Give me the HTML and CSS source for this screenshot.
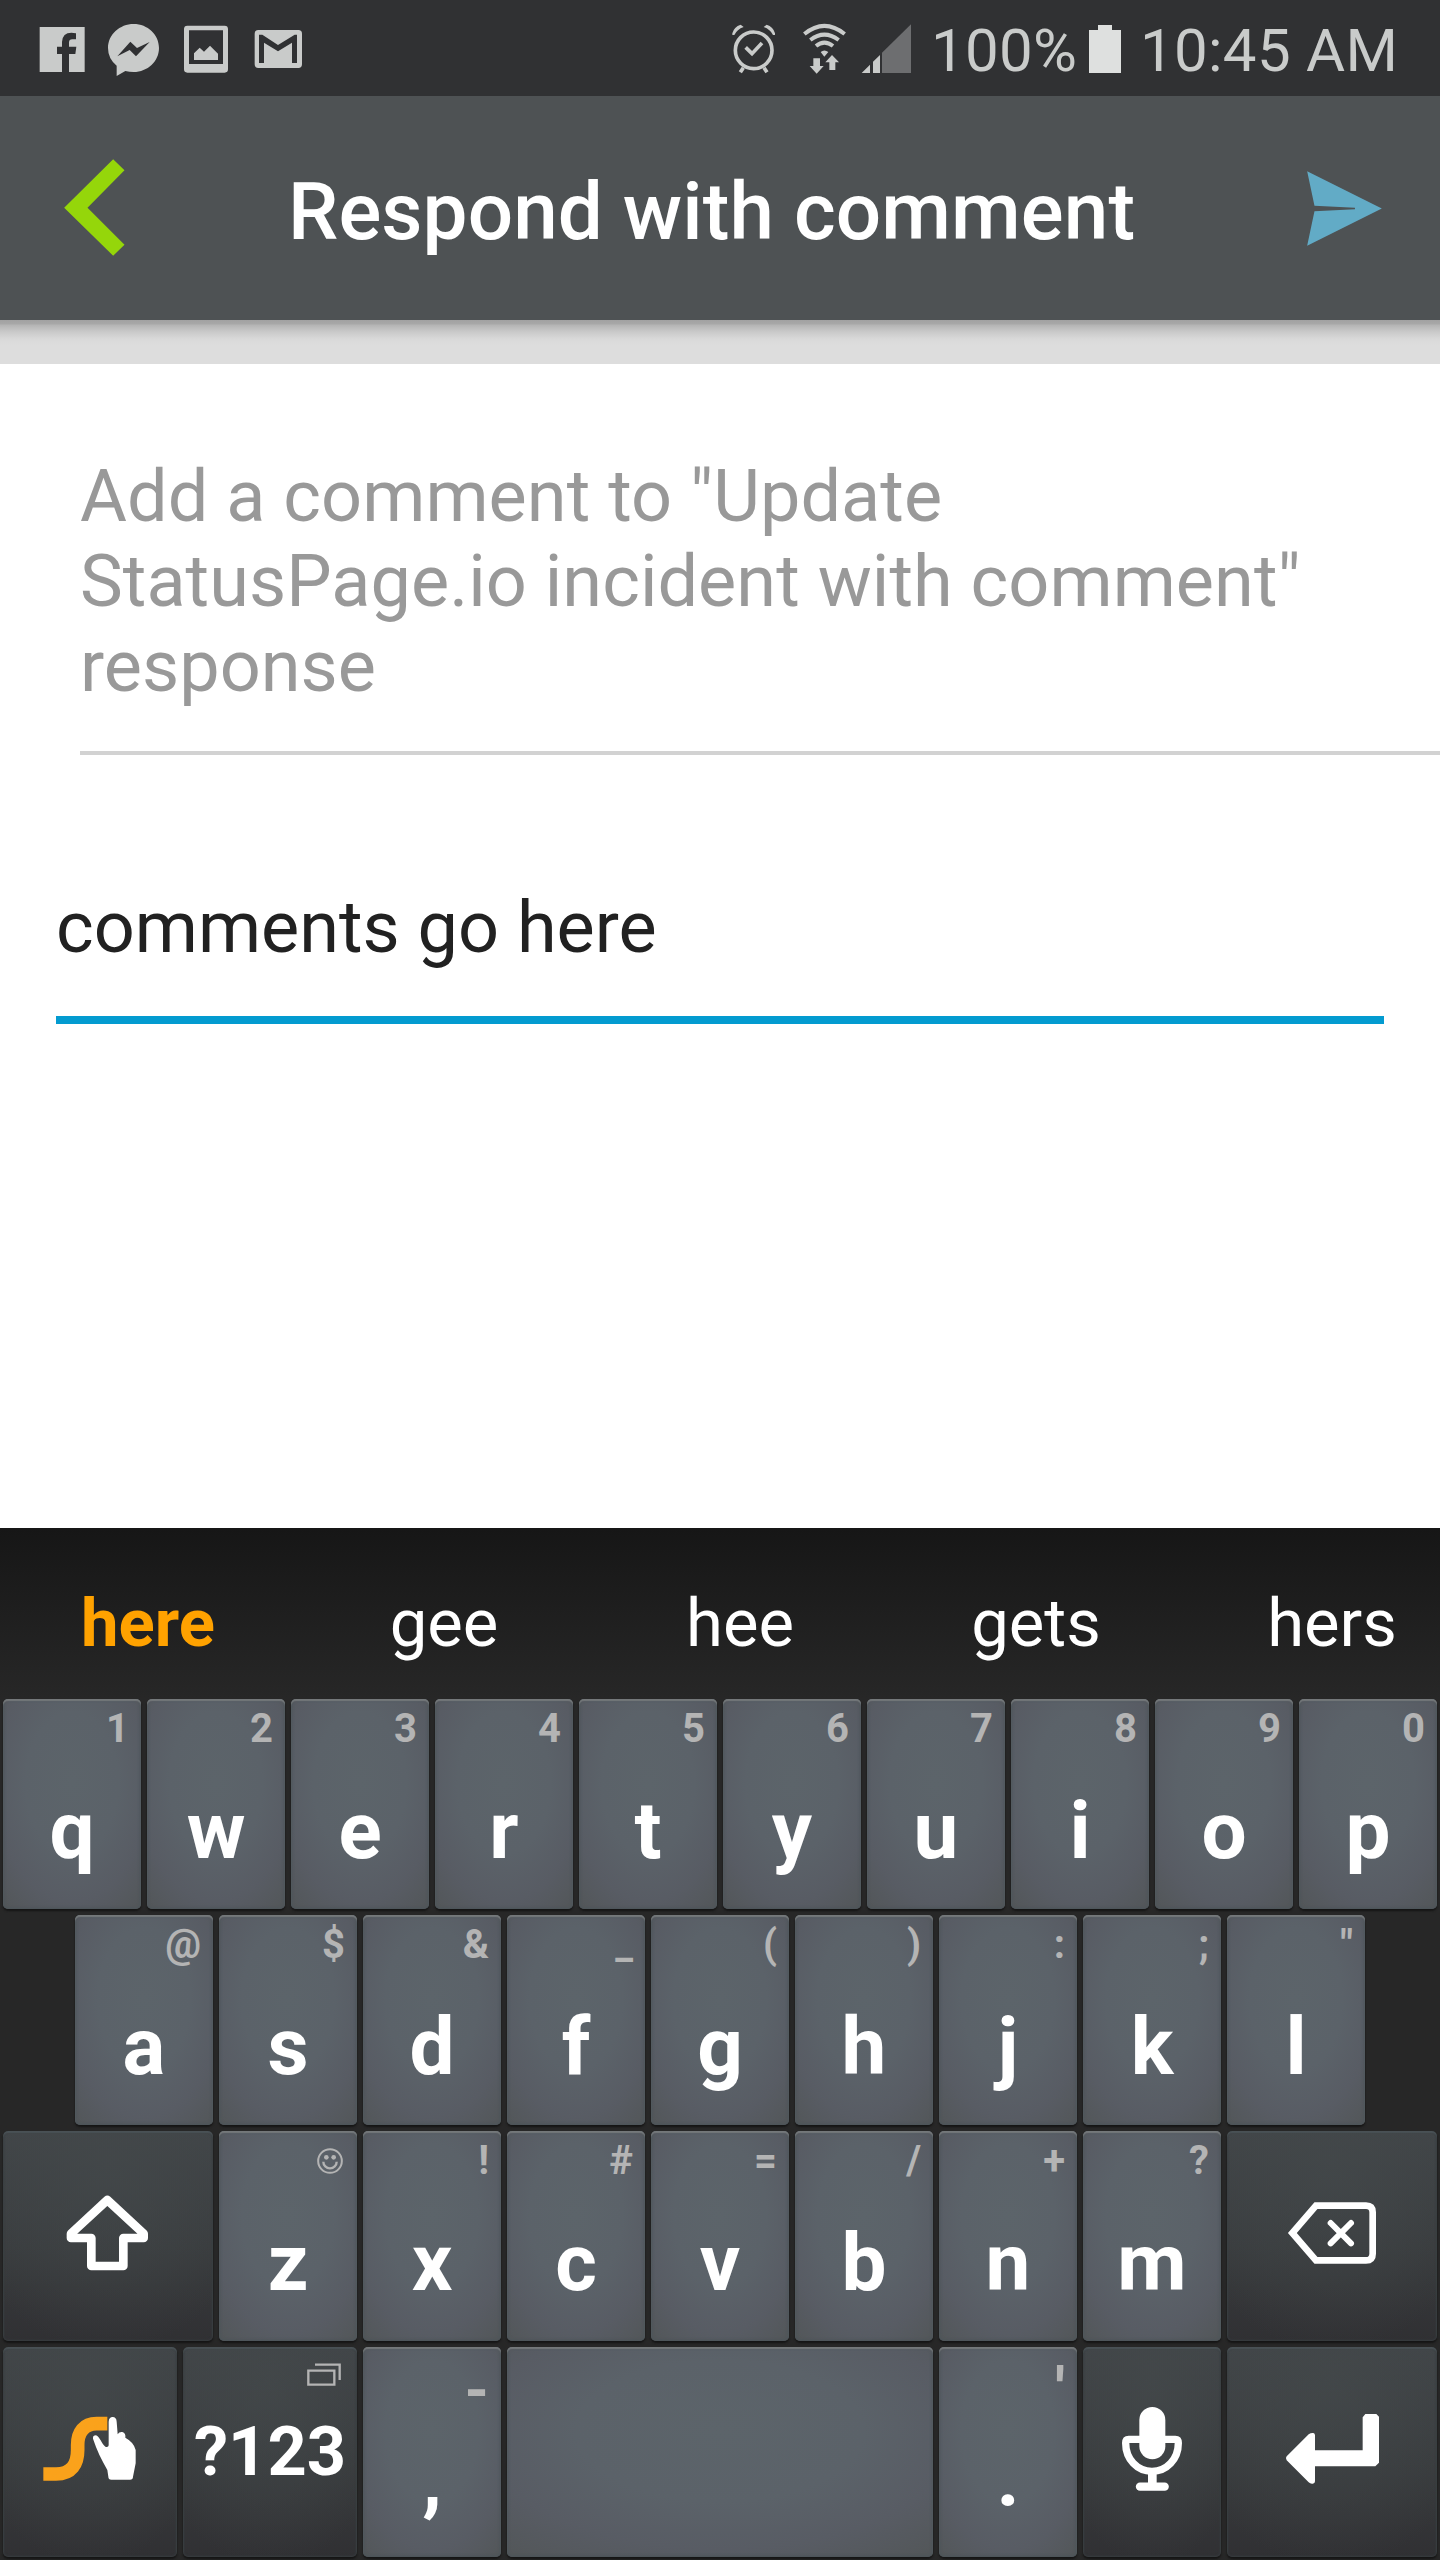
FILE: index.html
```html
<!DOCTYPE html>
<html lang="en">
<head>
<meta charset="utf-8">
<title>Respond with comment</title>
<link rel="stylesheet" href="styles.css">
</head>
<body>
<div class="screen">
  <div class="status">
    <div class="notifications">
      <svg class="note" viewBox="108 72 156 156"><path d="M119 81H254V216H207V162H226L229 140H207V128Q207 118 217 118H228V100Q188 92 186 126V140H171V162H186V216H119Z"/></svg>
      <svg class="note" viewBox="324 72 156 156"><path fill-rule="evenodd" d="M401 72C443 72 477 104 477 144S443 216 401 216Q388 216 376 213L350 228V197Q324 176 324 144C324 104 359 72 401 72ZM352 169L391 125L411 144L449 126L408 169L389 150Z"/></svg>
      <svg class="note" viewBox="540 72 156 156"><path fill-rule="evenodd" d="M562 77H674Q684 77 684 87V208Q684 218 674 218H562Q552 218 552 208V87Q552 77 562 77ZM567 91V192H669V91ZM582 180V160L599 143L612 155L630 137L654 161V180Z"/></svg>
      <svg class="note" viewBox="756 72 156 156"><path fill-rule="evenodd" d="M775 90H895Q906 90 906 101V193Q906 204 895 204H775Q764 204 764 193V101Q764 90 775 90ZM777 104V189H792V128L834 154L876 128V189H891V104H884L834 135L787 104Z"/></svg>
    </div>
    <div class="indicators">
      <svg class="ind" viewBox="39 36 150 156"><circle cx="116" cy="121" r="55" fill="none" stroke="#c9cbca" stroke-width="11"/><path d="M92 112L111 131L141 99M85 173L76 187M147 173L156 187" fill="none" stroke="#c9cbca" stroke-width="11"/><path d="M52 70Q57 50 77 44L86 51Q66 58 58 75L52 75ZM180 70Q175 50 155 44L146 51Q166 58 174 75L180 75Z"/></svg>
      <svg class="ind wifi" viewBox="252 36 150 156"><path d="M268 72Q328 23 389 72M286 90Q328 58 371 90M303 108Q328 88 354 108" fill="none" stroke="#c9cbca" stroke-width="12"/><path d="M317 126Q328 117 340 126L328 140ZM295 145H315V168H326L305 191L284 168H295ZM343 180H361V157H372L351 135L331 157H343Z"/></svg>
      <svg class="ind signal" viewBox="438 36 150 156"><path d="M440 189L465 164V189ZM474 189V155L495 135V189Z"/><path class="dim" d="M501 189V128L588 43V189Z"/></svg>
      <span class="percent">100%</span>
      <svg class="battery" viewBox="0 0 32 48"><path d="M9 0H23V5H32V48H0V5H9Z"/></svg>
      <span class="time">10:45 AM</span>
    </div>
  </div>

  <header class="header">
    <svg class="back" viewBox="192 479 182 291"><path d="M339 480L373 513L262 625L373 736L339 769L192 625Z"/></svg>
    <h1 class="title">Respond with comment</h1>
    <svg class="send" viewBox="799 511 225 226"><path d="M799 512L1024 624L799 736L821 632L943 626V622L821 616Z"/></svg>
  </header>
  <div class="band"></div>

  <main class="content">
    <p class="prompt">Add a comment to "Update<br>StatusPage.io incident with comment"<br>response</p>
    <div class="field">comments go here</div>
  </main>

  <section class="keyboard">
    <div class="suggestions"><span class="word best">here</span><span class="word">gee</span><span class="word">hee</span><span class="word">gets</span><span class="word">hers</span></div>
    <div class="rows">
      <div class="row">
        <div class="key"><span class="hint">1</span><span class="letter">q</span></div>
        <div class="key"><span class="hint">2</span><span class="letter">w</span></div>
        <div class="key"><span class="hint">3</span><span class="letter">e</span></div>
        <div class="key"><span class="hint">4</span><span class="letter">r</span></div>
        <div class="key"><span class="hint">5</span><span class="letter">t</span></div>
        <div class="key"><span class="hint">6</span><span class="letter">y</span></div>
        <div class="key"><span class="hint">7</span><span class="letter">u</span></div>
        <div class="key"><span class="hint">8</span><span class="letter">i</span></div>
        <div class="key"><span class="hint">9</span><span class="letter">o</span></div>
        <div class="key"><span class="hint">0</span><span class="letter">p</span></div>
      </div>
      <div class="row">
        <div class="key"><span class="hint">@</span><span class="letter">a</span></div>
        <div class="key"><span class="hint">$</span><span class="letter">s</span></div>
        <div class="key"><span class="hint">&amp;</span><span class="letter">d</span></div>
        <div class="key"><span class="hint">_</span><span class="letter">f</span></div>
        <div class="key"><span class="hint">(</span><span class="letter">g</span></div>
        <div class="key"><span class="hint">)</span><span class="letter">h</span></div>
        <div class="key"><span class="hint">:</span><span class="letter">j</span></div>
        <div class="key"><span class="hint">;</span><span class="letter">k</span></div>
        <div class="key"><span class="hint">"</span><span class="letter">l</span></div>
      </div>
      <div class="row">
        <div class="key dark wide"><svg class="glyph" viewBox="9 93 630 630"><path class="line" stroke-width="26" d="M322 300L213 401V414H274V498H370V414H431V401Z"/></svg></div>
        <div class="key"><span class="hint"><svg class="smiley" viewBox="951 144 78 78"><circle cx="990" cy="183" r="35.500" fill="none" stroke="#b4b4b4" stroke-width="6"/><circle cx="979" cy="172" r="7"/><circle cx="1001" cy="172" r="7"/><path d="M970 185A20 20 0 0 0 1010 185" fill="none" stroke="#b4b4b4" stroke-width="7"/></svg></span><span class="letter">z</span></div>
        <div class="key"><span class="hint">!</span><span class="letter">x</span></div>
        <div class="key"><span class="hint">#</span><span class="letter">c</span></div>
        <div class="key"><span class="hint">=</span><span class="letter">v</span></div>
        <div class="key"><span class="hint">/</span><span class="letter">b</span></div>
        <div class="key"><span class="hint">+</span><span class="letter">n</span></div>
        <div class="key"><span class="hint">?</span><span class="letter">m</span></div>
        <div class="key dark wide"><svg class="glyph" viewBox="501 93 630 630"><path class="line miter" stroke-width="20" d="M768 317H918Q938 317 938 337V461Q938 481 918 481H768L697 399Z"/><path class="line" stroke-width="18" d="M812 369L873 430M873 369L812 430"/></svg></div>
      </div>
      <div class="row">
        <div class="key dark mid"><svg class="glyph" viewBox="9 741 522 630"><path d="M130 1122H168C215 1122 233 1092 233 1050V1035C233 996 252 971 290 971H322" fill="none" stroke="#faa21b" stroke-width="41"/><path d="M326 965Q327 951 338 951Q349 951 350 965L353 1003Q357 995 367 996Q378 1000 376 1013Q402 1027 407 1050V1090L399 1130Q399 1139 390 1139H334Q325 1139 325 1130L322 1110C305 1080 290 1050 279 1016Q278 1006 288 1006C300 1011 304 1030 316 1040Q325 1043 326 1036Z"/></svg></div>
        <div class="key dark mid"><span class="hint"><svg class="stack" viewBox="921 789 102 69"><path d="M925 812H1003V854H925ZM945 794H1019V840" fill="none" stroke="#b4b4b4" stroke-width="7"/></svg></span><span class="letter symbols">?123</span></div>
        <div class="key"><span class="hint large">-</span><span class="letter">,</span></div>
        <div class="key space"></div>
        <div class="key"><span class="hint large">'</span><span class="letter">.</span></div>
        <div class="key dark"><svg class="glyph" viewBox="69 741 414 630"><rect x="238" y="921" width="78" height="157" rx="39"/><path class="line" stroke-width="22" d="M242 1018H206Q197 1018 197 1029C197 1078 232 1114 276 1114S355 1078 355 1029Q355 1018 346 1018H312"/><path d="M264 1114H290V1155H264Z"/><path class="line" stroke-width="25" d="M240 1160H314"/></svg></div>
        <div class="key dark wide"><svg class="glyph" viewBox="501 741 630 630"><path d="M680 1069L746 1003Q753 998 760 999Q765 1000 765 1006V1051H908V952L916 942H949L957 950V1088L946 1099H765V1144Q765 1151 758 1151Q751 1152 746 1147L680 1081Q675 1075 680 1069Z"/></svg></div>
      </div>
    </div>
  </section>
</div>
</body>
</html>
```
FILE: styles.css
```css
* { box-sizing: border-box; }
body { margin: 0; font-family: Roboto, "Liberation Sans", sans-serif; background: #fff; }
svg { display: block; flex: none; }
.screen { width: 1440px; height: 2560px; display: flex; flex-direction: column; overflow: hidden; }

.status { height: 96px; background: #303133; display: flex; padding: 0 0 0 36px; flex: none; color: #c9cbca; }
.notifications { display: flex; gap: 20px; padding-top: 24px; width: 692px; }
.note { width: 52px; height: 52px; fill: #c9cbca; }
.indicators { display: flex; font-size: 60px; line-height: 70px; white-space: nowrap; }
.ind { width: 50px; height: 52px; margin-top: 22px; fill: #c9cbca; }
.wifi { margin-left: 21px; }
.signal { margin-left: 12px; }
.dim { fill: #6d6e70; }
.percent { width: 158px; margin: 16px 0 0 20px; letter-spacing: 0.3px; }
.battery { width: 32px; height: 48px; margin-top: 25px; fill: #dee0df; }
.time { margin: 16px 0 0 19px; letter-spacing: 0.3px; }

.header { height: 224px; flex: none; background: #4e5254; display: flex; align-items: center; padding: 0 58px 0 64px; }
.back { width: 61px; height: 97px; fill: #95d60a; margin-bottom: 1px; }
.title { margin: 0 auto 0 163px; padding-top: 8px; font-size: 80px; line-height: 94px; font-weight: 500; letter-spacing: 0.08px; color: #fff; white-space: nowrap; }
.send { width: 75px; height: 75px; fill: #62abc6; }
.band { height: 44px; flex: none; background: linear-gradient(#a2a2a2 0, #a8a8a8 4px, #b4b4b4 5px, #cacaca 12px, #d9d9d9 19px, #ddd 25px); }

.content { flex: 1; font-size: 72px; line-height: 85px; }
.prompt { margin: 0 0 0 80px; padding: 90px 0 42px; color: #999; border-bottom: 4px solid #d2d2d2; white-space: nowrap; letter-spacing: 0.05px; }
.field { margin: 130px 56px 0; padding-bottom: 46px; color: #212121; border-bottom: 8px solid #039bd0; }

.keyboard { height: 1032px; flex: none; background: linear-gradient(#161616 0, #272727 170px); }
.suggestions { height: 171px; display: flex; overflow: hidden; padding-top: 56px; }
.word { width: 296px; flex: none; text-align: center; font-size: 67px; line-height: 79px; color: #fff; }
.best { font-weight: 700; color: #ffa200; }
.rows { display: flex; flex-direction: column; gap: 6px; }
.row { display: flex; gap: 6px; justify-content: center; }
.key {
  width: 138px; height: 210px; flex: none; padding-top: 7px; border-radius: 5px;
  display: flex; flex-direction: column; color: #fff; font-weight: 700;
  background: radial-gradient(ellipse 75% 75% at 50% 40%, #5c646a 0, #5b6269 45%, #585c64 75%, #53575a 100%);
  box-shadow: inset 0 2px 1px #74787a, inset 0 0 3px 1px #4b5459, 0 2px 2px #151515;
}
.dark {
  background: radial-gradient(ellipse 75% 90% at 50% 15%, rgba(67,72,74,.8) 0, rgba(60,64,66,0) 100%), linear-gradient(#414548, #393c3e 55%, #303033);
  box-shadow: inset 0 2px 1px #495155, inset 0 0 2px 1px #383d40, 0 2px 2px #151515;
}
.wide { width: 210px; padding: 0; }
.mid { width: 174px; }
.space { width: 426px; }
.hint { height: 46px; display: flex; justify-content: flex-end; padding-right: 12px; font-size: 40px; line-height: 46px; color: #b4b4b4; }
.large { font-size: 62px; padding-top: 13px; }
.letter { margin-top: 39px; font-size: 80px; line-height: 80px; text-align: center; }
.symbols { font-size: 68.5px; margin-top: 12px; }
.glyph { width: 100%; height: 210px; fill: #fff; }
.key > .glyph:first-child { margin-top: -7px; }
.wide > .glyph:first-child { margin-top: 0; }
.line { fill: none; stroke: #fff; stroke-linecap: round; stroke-linejoin: round; }
.miter { stroke-linejoin: miter; }
.smiley { width: 26px; height: 26px; margin: 10px 2px 0 0; fill: #b4b4b4; }
.stack { width: 34px; height: 23px; margin: 9px 4px 0 0; }
```
